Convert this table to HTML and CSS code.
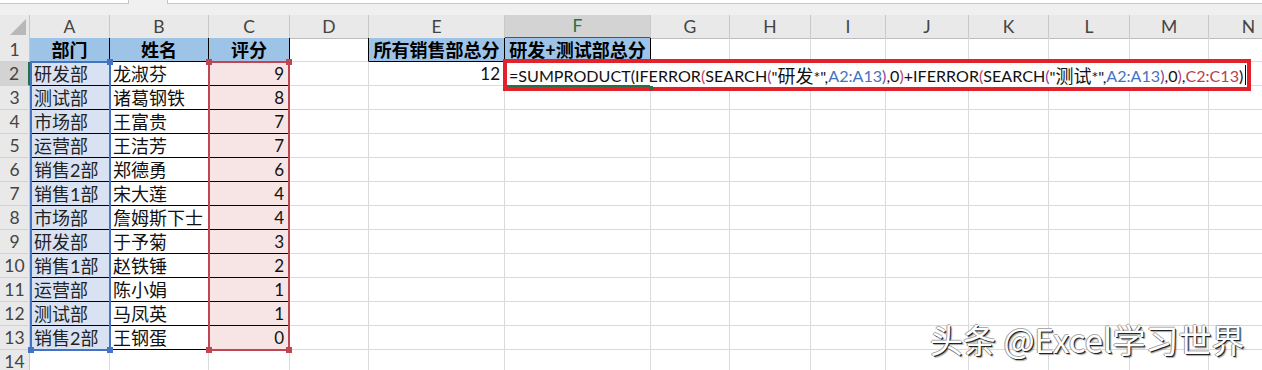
FILE: index.html
```html
<!DOCTYPE html>
<html lang="zh-CN">
<head>
<meta charset="utf-8">
<title>Excel</title>
<link rel="stylesheet" href="styles.css">
</head>
<body>
<div class="topbar"><div class="namebox"></div><div class="fxbox"></div></div>
<div class="sheet">
  <div class="row hdr"><span class="corner"><svg width="16" height="16" viewBox="0 0 16 16"><polygon points="16,0 16,16 0,16" fill="#b8b8b8"/></svg></span><span>A</span><span>B</span><span>C</span><span>D</span><span>E</span><span class="hsel">F</span><span>G</span><span>H</span><span>I</span><span>J</span><span>K</span><span>L</span><span>M</span><span>N</span></div>
  <div class="row"><span class="rh">1</span><span class="t">部门</span><span class="t">姓名</span><span class="t">评分</span><span class="dk"></span><span class="t">所有销售部总分</span><span class="t">研发+测试部总分</span><span></span><span></span><span></span><span></span><span></span><span></span><span></span><span></span></div>
  <div class="row"><span class="rh act">2</span><span class="a">研发部</span><span class="b">龙淑芬</span><span class="n">9</span><span></span><span class="v">12</span><span></span><span></span><span></span><span></span><span></span><span></span><span></span><span></span><span></span></div>
  <div class="row"><span class="rh">3</span><span class="a">测试部</span><span class="b">诸葛钢铁</span><span class="n">8</span><span></span><span></span><span></span><span></span><span></span><span></span><span></span><span></span><span></span><span></span><span></span></div>
  <div class="row"><span class="rh">4</span><span class="a">市场部</span><span class="b">王富贵</span><span class="n">7</span><span></span><span></span><span></span><span></span><span></span><span></span><span></span><span></span><span></span><span></span><span></span></div>
  <div class="row"><span class="rh">5</span><span class="a">运营部</span><span class="b">王洁芳</span><span class="n">7</span><span></span><span></span><span></span><span></span><span></span><span></span><span></span><span></span><span></span><span></span><span></span></div>
  <div class="row"><span class="rh">6</span><span class="a">销售2部</span><span class="b">郑德勇</span><span class="n">6</span><span></span><span></span><span></span><span></span><span></span><span></span><span></span><span></span><span></span><span></span><span></span></div>
  <div class="row"><span class="rh">7</span><span class="a">销售1部</span><span class="b">宋大莲</span><span class="n">4</span><span></span><span></span><span></span><span></span><span></span><span></span><span></span><span></span><span></span><span></span><span></span></div>
  <div class="row"><span class="rh">8</span><span class="a">市场部</span><span class="b">詹姆斯下士</span><span class="n">4</span><span></span><span></span><span></span><span></span><span></span><span></span><span></span><span></span><span></span><span></span><span></span></div>
  <div class="row"><span class="rh">9</span><span class="a">研发部</span><span class="b">于予菊</span><span class="n">3</span><span></span><span></span><span></span><span></span><span></span><span></span><span></span><span></span><span></span><span></span><span></span></div>
  <div class="row"><span class="rh">10</span><span class="a">销售1部</span><span class="b">赵铁锤</span><span class="n">2</span><span></span><span></span><span></span><span></span><span></span><span></span><span></span><span></span><span></span><span></span><span></span></div>
  <div class="row"><span class="rh">11</span><span class="a">运营部</span><span class="b">陈小娟</span><span class="n">1</span><span></span><span></span><span></span><span></span><span></span><span></span><span></span><span></span><span></span><span></span><span></span></div>
  <div class="row"><span class="rh">12</span><span class="a">测试部</span><span class="b">马凤英</span><span class="n">1</span><span></span><span></span><span></span><span></span><span></span><span></span><span></span><span></span><span></span><span></span><span></span></div>
  <div class="row"><span class="rh">13</span><span class="a">销售2部</span><span class="b">王钢蛋</span><span class="n">0</span><span></span><span></span><span></span><span></span><span></span><span></span><span></span><span></span><span></span><span></span><span></span></div>
  <div class="row"><span class="rh">14</span><span></span><span></span><span></span><span></span><span></span><span></span><span></span><span></span><span></span><span></span><span></span><span></span><span></span><span></span></div>

  <div class="range blue"><i class="hd tr"></i><i class="hd bl"></i><i class="hd br"></i></div>
  <div class="range red"><i class="hd tl"></i><i class="hd tr"></i><i class="hd bl"></i><i class="hd br"></i></div>

  <div class="editor">
    <div class="fx"><span>=SUMPRODUCT(IFERROR</span><span class="p2">(</span><span>SEARCH</span><span class="p3">(</span><span>"<span class="cj">研发</span>*",</span><span class="rb">A2:A13</span><span class="p3">)</span><span>,0</span><span class="p2">)</span><span>+IFERROR</span><span class="p2">(</span><span>SEARCH</span><span class="p3">(</span><span>"<span class="cj">测试</span>*",</span><span class="rb">A2:A13</span><span class="p3">)</span><span>,0</span><span class="p2">)</span><span>,</span><span class="rr">C2:C13</span><span>)</span><i class="caret"></i></div>
    <i class="cellsel"></i><i class="cellhd"></i>
  </div>
</div>
<div class="watermark">头条 @Excel学习世界</div>
</body>
</html>
```

FILE: styles.css
```css
:root {
  --cols: 30px 80px 99px 81px 79px 136px 146px 79px 81px 75px 83px 80px 81px 79px 80px;
  --grid: #dadada;
  --green: #217346;
  --blue: #4472c4;
  --red: #bf4650;
}
html, body {
  margin: 0;
  padding: 0;
}
body {
  width: 1262px;
  height: 370px;
  overflow: hidden;
  background: #fff;
  position: relative;
  font-family: Lato, "Noto Sans CJK SC", sans-serif;
  color: #111;
}
.topbar {
  height: 15px;
  background: #f0f0f0;
  display: flex;
  gap: 38px;
  align-items: flex-start;
}
.namebox {
  width: 128px;
  height: 3px;
  background: #fff;
  border-right: 1px solid #c6c6c6;
  border-bottom: 1px solid #c6c6c6;
}
.fxbox {
  flex: 1;
  height: 3px;
  background: #fff;
  border-left: 1px solid #c6c6c6;
  border-bottom: 1px solid #c6c6c6;
}
.sheet {
  position: relative;
}
.row {
  display: grid;
  grid-template-columns: var(--cols);
  height: 24px;
}
.row.hdr {
  height: 23px;
}
.row > span {
  box-sizing: border-box;
  border-right: 1px solid var(--grid);
  border-bottom: 1px solid var(--grid);
  display: flex;
  align-items: center;
  white-space: nowrap;
  font-size: 18px;
  line-height: 22px;
  min-width: 0;
}
.hdr > span {
  background: #e9e9e9;
  border-right-color: #c8c8c8;
  border-bottom-color: #bcbcbc;
  justify-content: center;
  font-size: 17.5px;
  color: #444;
}
.hdr > .corner {
  justify-content: flex-end;
  align-items: flex-end;
  padding: 0 3px 3px 0;
}
.hdr > .hsel {
  background: #d3d3d3;
  color: var(--green);
  border-bottom: 2px solid var(--green);
}
.row > .rh {
  background: #e9e9e9;
  border-right-color: #c8c8c8;
  border-bottom-color: #d2d2d2;
  justify-content: center;
  font-size: 17.5px;
  color: #444;
}
.row > .rh.act {
  background: #d3d3d3;
  border-right: 2px solid var(--green);
}
.row > .t {
  background: #9dc3e6;
  font-weight: 700;
  justify-content: center;
  border-right-color: #000;
  border-bottom-color: #000;
  color: #000;
}
.row > .dk {
  border-right-color: #000;
}
.row > .a {
  background: #d9e2f3;
  border-right-color: #000;
  border-bottom-color: #000;
  padding-left: 4px;
  color: #222;
}
.row > .b {
  border-right-color: #000;
  border-bottom-color: #000;
  padding-left: 3px;
  color: #111;
}
.row > .n {
  background: #f7e4e4;
  border-right-color: #000;
  border-bottom-color: #000;
  justify-content: flex-end;
  padding-right: 5px;
  font-size: 17px;
}
.row > .v {
  justify-content: flex-end;
  padding-right: 4px;
  font-size: 17px;
}

/* formula reference ranges */
.range {
  position: absolute;
  top: 46px;
  height: 290px;
  box-sizing: border-box;
  border: 2px solid;
}
.range.blue {
  left: 30px;
  width: 81px;
  border-color: var(--blue);
}
.range.red {
  left: 208px;
  width: 82px;
  border-color: var(--red);
}
.hd {
  position: absolute;
  width: 6px;
  height: 6px;
  background: currentColor;
}
.blue .hd { color: var(--blue); }
.red .hd { color: var(--red); }
.hd.tl { left: -4px; top: -4px; }
.hd.tr { right: -4px; top: -4px; }
.hd.bl { left: -4px; bottom: -4px; }
.hd.br { right: -4px; bottom: -4px; }

/* in-cell editor with annotation frame */
.editor {
  position: absolute;
  left: 503px;
  top: 44px;
  width: 748px;
  height: 32px;
  box-sizing: border-box;
  border: 4px solid #e3212b;
  background: #fff;
}
.fx {
  display: flex;
  align-items: center;
  height: 24px;
  padding-left: 2px;
  font-size: 16.1px;
  white-space: nowrap;
  color: #111;
}
.fx .cj { font-size: 18px; }
.fx .p2 { color: #c8416a; }
.fx .p3 { color: #8a3fa0; }
.fx .rb { color: #4472c4; }
.fx .rr { color: #b8404a; }
.caret {
  display: inline-block;
  width: 1px;
  height: 20px;
  background: #000;
  margin-left: 2px;
}
.cellsel {
  position: absolute;
  left: 0;
  bottom: 0;
  width: 143px;
  height: 2px;
  background: var(--green);
}
.cellhd {
  position: absolute;
  left: 142px;
  bottom: -3px;
  width: 4px;
  height: 4px;
  background: var(--green);
}

.watermark {
  position: absolute;
  left: 930px;
  top: 318px;
  font-family: "Noto Sans CJK SC", sans-serif;
  font-size: 33px;
  line-height: 42px;
  color: #fff;
  white-space: nowrap;
  text-shadow: 1px 1px 0 #222, -1px 0 0 #999, 0 -1px 0 #aaa, 2px 2px 1px rgba(0,0,0,0.35);
}
```
